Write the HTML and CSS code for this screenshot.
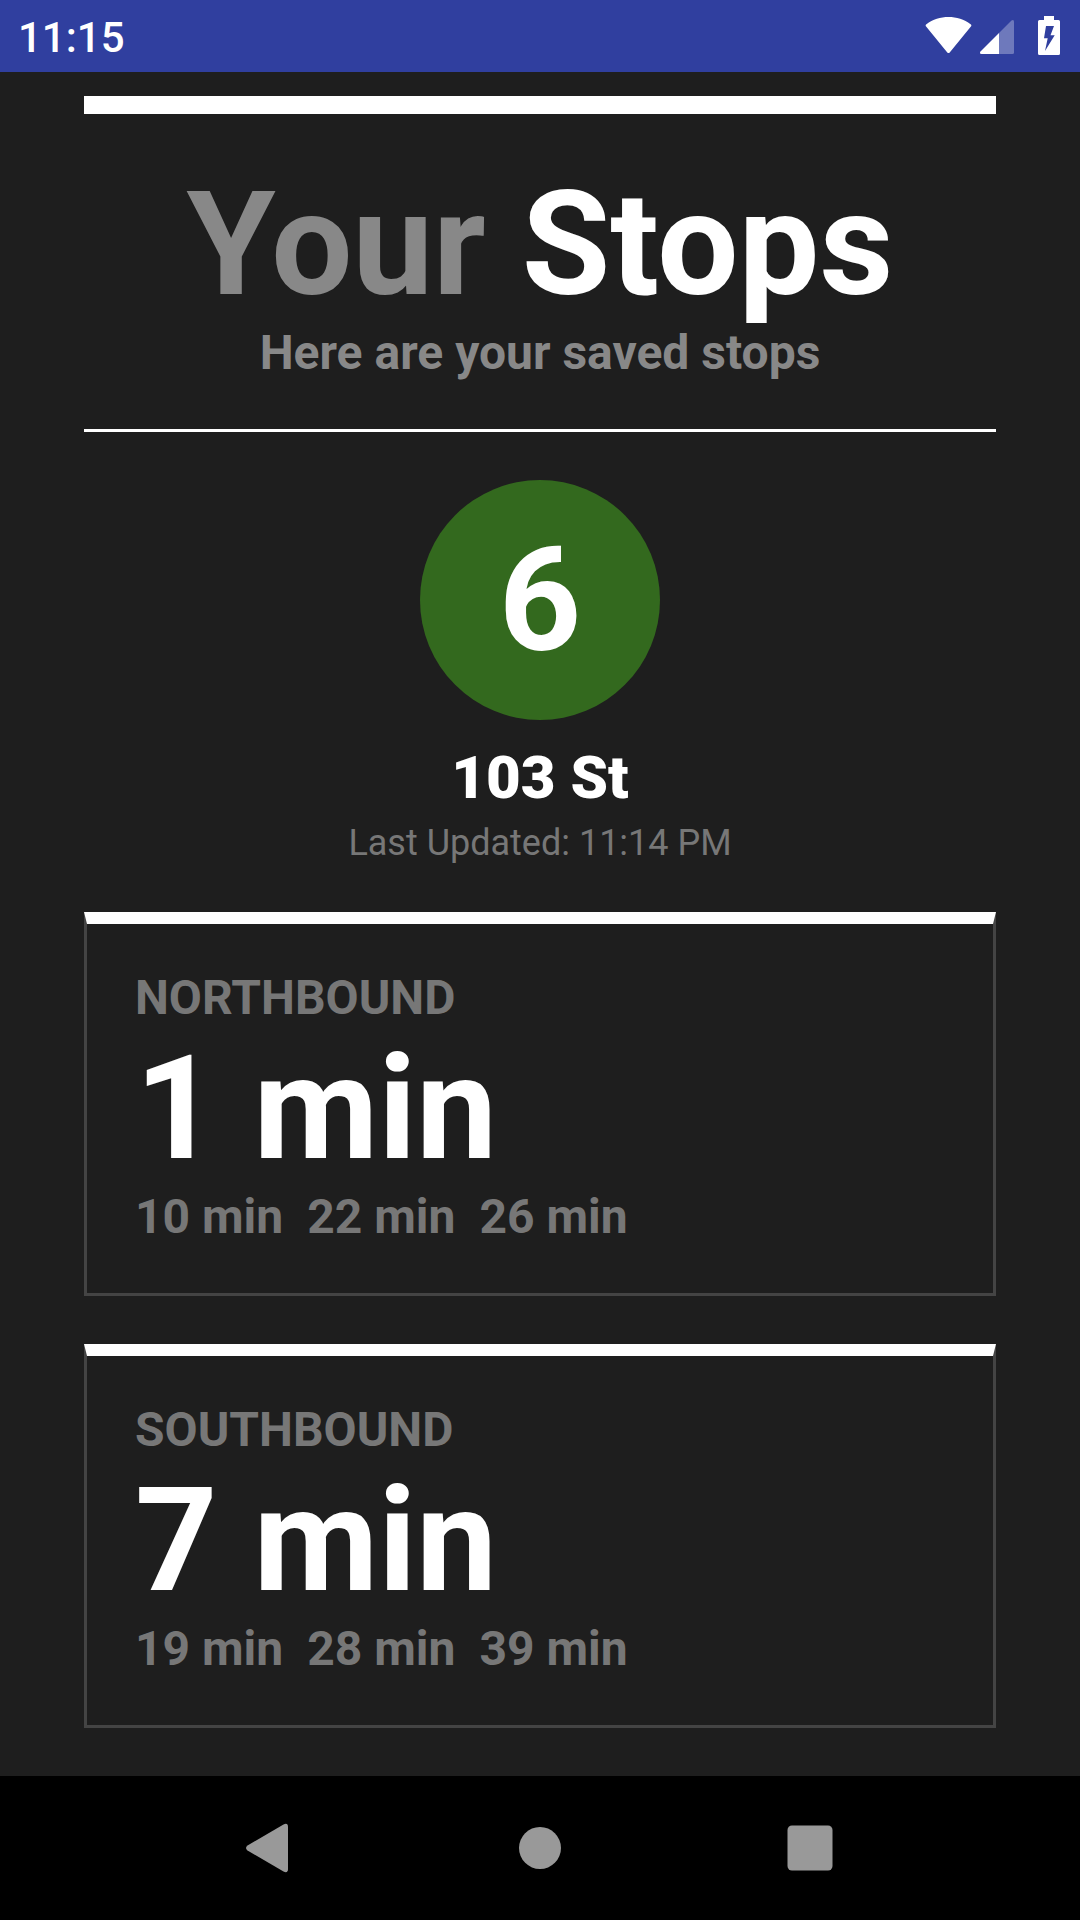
FILE: index.html
```html
<!DOCTYPE html>
<html lang="en">
<head>
<meta charset="utf-8">
<title>Your Stops</title>
<link rel="stylesheet" href="styles.css">
</head>
<body>
<header class="status">
  <span class="clock">11:15</span>
  <svg class="status-icons" width="136" height="40" viewBox="0 0 136 40">
    <path fill="#fff" d="M22.300 36.400L.9 10.300Q.2 9 1.400 8.200C14-1.300 33-1.300 45.600 8.200Q46.800 9 46.100 10.300L24.700 36.400Q23.500 37.600 22.300 36.400Z"/>
    <path fill="#fff" fill-opacity=".3" d="M74 17L86.500 4.500Q89 3 89 6V36.500Q89 38 87.500 38H74Z"/>
    <path fill="#fff" d="M74 17V38H56.500Q54 37.500 55.500 35.500Z"/>
    <path fill="#fff" fill-rule="evenodd" d="M119 0h10v4h4.500q1.500 0 1.500 1.500v32q0 1.500-1.500 1.500h-19q-1.500 0-1.500-1.500v-32q0-1.500 1.500-1.500H119ZM121 10L119 22.300H122.700L120 35L129.700 19.200H125.500L129 10Z"/>
  </svg>
</header>
<main class="content">
  <section class="heading">
    <h1 class="title"><span class="muted">Your</span> Stops</h1>
    <p class="subtitle">Here are your saved stops</p>
  </section>
  <section class="stop">
    <div class="line-badge">6</div>
    <h2 class="stop-name">103 St</h2>
    <p class="updated">Last Updated: 11:14 PM</p>
  </section>
  <article class="card">
    <h3 class="direction">NORTHBOUND</h3>
    <p class="next">1 min</p>
    <p class="later"><span>10 min</span><span>22 min</span><span>26 min</span></p>
  </article>
  <article class="card">
    <h3 class="direction">SOUTHBOUND</h3>
    <p class="next">7 min</p>
    <p class="later"><span>19 min</span><span>28 min</span><span>39 min</span></p>
  </article>
</main>
<nav class="navbar">
  <svg width="1080" height="144" viewBox="0 0 1080 144">
    <path fill="#999" d="M283.500 48.400Q288 46.500 288 51V93Q288 97.500 283.500 95.600L247.500 74.500Q244.500 72 247.500 69.500Z"/>
    <circle cx="540" cy="72" r="21" fill="#999"/>
    <rect x="787.500" y="49.500" width="45" height="45" rx="4.500" fill="#999"/>
  </svg>
</nav>
</body>
</html>
```
FILE: styles.css
```css
* { box-sizing: border-box; }
body, h1, h2, h3, p { margin: 0; }
body {
  display: flex;
  flex-direction: column;
  width: 1080px;
  height: 1920px;
  overflow: hidden;
  background: #1e1e1e;
  color: #fff;
  font-family: Roboto, sans-serif;
}
.status {
  display: flex;
  justify-content: space-between;
  height: 72px;
  padding: 16px 19px 0 18px;
  background: #303f9f;
}
.clock { font-size: 42px; line-height: 43px; font-weight: 500; }
.status-icons { display: block; }
.content { flex: 1; padding: 24px 84px 0; }
.heading {
  height: 336px;
  padding-top: 46px;
  border-top: 18px solid #fff;
  border-bottom: 3px solid #fff;
  text-align: center;
}
.title { font-size: 144px; line-height: 169px; font-weight: 700; }
.muted { color: #888; }
.subtitle { margin-top: -4px; font-size: 48px; line-height: 56px; font-weight: 700; color: #888; }
.stop { height: 480px; padding-top: 48px; text-align: center; }
.line-badge {
  width: 240px;
  height: 240px;
  margin: 0 auto;
  border-radius: 50%;
  background: #33691e;
  font-size: 144px;
  line-height: 241px;
  font-weight: 700;
}
.stop-name { margin-top: 23px; font-size: 60px; line-height: 70px; font-weight: 900; }
.updated { margin-top: 9px; font-size: 36px; line-height: 42px; color: #777; }
.card {
  height: 384px;
  margin-bottom: 48px;
  padding: 46px 48px 0;
  border: 3px solid #444;
  border-top: 12px solid #fff;
}
.direction { font-size: 48px; line-height: 56px; font-weight: 700; color: #777; }
.next { margin: -2px 0 -4px; font-size: 144px; line-height: 169px; font-weight: 700; }
.later { display: flex; gap: 24px; font-size: 48px; line-height: 56px; font-weight: 700; color: #777; }
.navbar { height: 144px; background: #000; }
.navbar svg { display: block; }
```
